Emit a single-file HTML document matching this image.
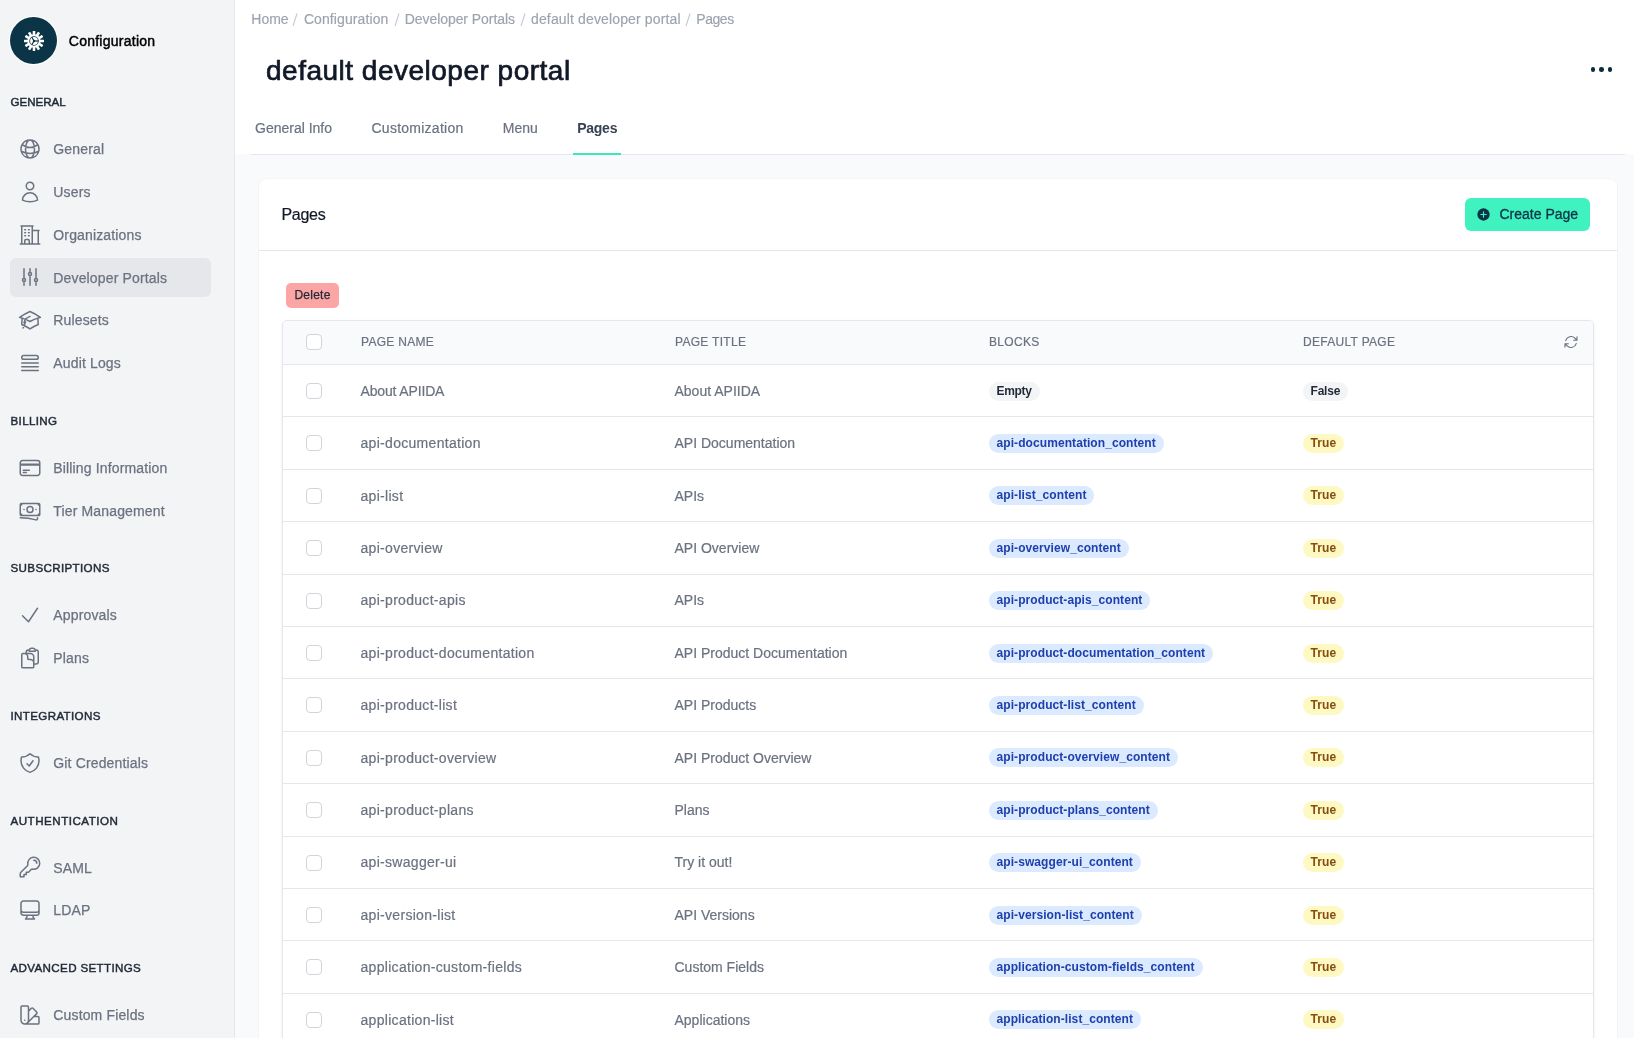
<!DOCTYPE html><html><head><meta charset="utf-8"><title>default developer portal</title><style>
*{box-sizing:border-box;margin:0;padding:0}
html,body{width:1634px;height:1038px;overflow:hidden;background:#f9fafb;font-family:"Liberation Sans",sans-serif;}
.abs{position:absolute}
#sb,#main{will-change:transform}
#sb{position:absolute;left:0;top:0;width:235px;height:1038px;background:#f3f4f6;border-right:1px solid #e5e7eb}
.logo{position:absolute;left:9px;top:16px;width:49px;height:49px;border-radius:50%;background:#fff;}
.logo .in{position:absolute;left:1px;top:1px;width:47px;height:47px;border-radius:50%;background:#0b3446}
.logo svg{position:absolute;left:11.5px;top:11.5px}
.cfg{position:absolute;left:68.8px;top:30.5px;height:20px;line-height:20px;font-size:14px;color:#000;letter-spacing:0.25px;-webkit-text-stroke:0.45px #000}
.sh{position:absolute;left:10.5px;height:16px;line-height:16px;font-size:11.6px;color:#1f2937;letter-spacing:0.35px;-webkit-text-stroke:0.45px #1f2937}
.ni{position:absolute;left:10px;width:200.5px;height:38.8px;border-radius:6px}
.ni.act{background:#e5e7eb}
.ni svg{position:absolute;left:7.7px;top:7.4px}
.ni span{position:absolute;left:43.3px;top:9.5px;height:20px;line-height:20px;font-size:14px;color:#6b7280;white-space:nowrap;letter-spacing:0.15px;-webkit-text-stroke:0.25px #6b7280}
#main{position:absolute;left:235px;top:0;width:1399px;height:1038px;background:#f9fafb}
#hdr{position:absolute;left:0;top:0;width:1399px;height:154px;background:#fff}
.bc{position:absolute;top:9px;height:20px;line-height:20px;font-size:14px;color:#9ca3af;white-space:nowrap;letter-spacing:0.08px;-webkit-text-stroke:0.15px #9ca3af}
.bcs{position:absolute;top:12px;width:6px;height:15px}
.title{position:absolute;left:31px;top:52.8px;height:36px;line-height:36px;font-size:28px;letter-spacing:0.5px;-webkit-text-stroke:0.7px #111827;color:#111827;white-space:nowrap}
.kebab{position:absolute;top:67px;width:4.6px;height:4.6px;border-radius:50%;background:#0b2a3a}
.tabline{position:absolute;left:16px;top:154px;width:1374px;height:1px;background:#e5e7eb}
.tab{position:absolute;top:118px;height:20px;line-height:20px;font-size:14px;color:#6b7280;white-space:nowrap;-webkit-text-stroke:0.2px #6b7280}
.tab.act{color:#374151;font-weight:bold;-webkit-text-stroke:0;letter-spacing:-0.25px}
.uline{position:absolute;left:338px;top:153px;width:48px;height:2px;background:#3ee8b4}
#card{position:absolute;left:24px;top:179px;width:1358px;height:900px;background:#fff;border-radius:8px;box-shadow:0 0 0 1px rgba(17,24,39,0.018),0 1px 2px rgba(0,0,0,0.04)}
.ctitle{position:absolute;left:22.5px;top:25.2px;height:22px;line-height:22px;font-size:16px;letter-spacing:-0.3px;-webkit-text-stroke:0.2px #111827;color:#111827}
.cbtn{position:absolute;left:1206px;top:19px;width:125px;height:33px;border-radius:6px;background:#41f2c1}
.cbtn svg{position:absolute;left:11.8px;top:9.7px}
.cbtn span{position:absolute;left:34.5px;top:5.7px;height:20px;line-height:20px;font-size:14px;color:#0b3446;white-space:nowrap;-webkit-text-stroke:0.3px #0b3446}
.cdiv{position:absolute;left:0;top:71px;width:1358px;height:1px;background:#e5e7eb}
.del{position:absolute;left:27px;top:104px;width:53px;height:25px;border-radius:5px;background:#fca5a5;font-size:12px;line-height:25px;text-align:center;color:#1f2937;letter-spacing:0.25px;-webkit-text-stroke:0.25px #1f2937}
#tbl{position:absolute;left:23px;top:141px;width:1312px;height:800px;border:1px solid #e5e7eb;border-radius:5px;box-shadow:0 1px 3px rgba(0,0,0,0.08);overflow:hidden;background:#fff}
.th{position:absolute;left:0;top:0;width:1310px;height:44px;background:#f9fafb;border-bottom:1px solid #e5e7eb}
.thx{position:absolute;top:13px;height:16px;line-height:16px;font-size:12px;color:#6b7280;letter-spacing:0.3px;-webkit-text-stroke:0.2px #6b7280;white-space:nowrap}
.cb{position:absolute;left:23px;width:16px;height:16px;border:1px solid #d1d5db;border-radius:4px;background:#fff}
.row{position:absolute;left:0;width:1310px;border-bottom:1px solid #e5e7eb}
.td{position:absolute;height:20px;line-height:20px;font-size:14px;color:#6b7280;white-space:nowrap;-webkit-text-stroke:0.2px #6b7280}
.bd{position:absolute;height:19px;line-height:19px;font-size:12px;font-weight:bold;letter-spacing:0.08px;padding:0 8px;border-radius:10px;white-space:nowrap}
.bg{background:#f3f4f6;color:#1f2937}
.bb{background:#dbeafe;color:#1e40af}
.by{background:#fef9c3;color:#854d0e}
</style></head><body>
<div id="sb"><div class="logo"><div class="in"><svg width="24" height="24" viewBox="0 0 24 24"><g fill="#fff"><rect x="10.7" y="2" width="2.6" height="4.6" rx="0.4" transform="rotate(0 12 12)"/><rect x="10.7" y="2" width="2.6" height="4.6" rx="0.4" transform="rotate(30 12 12)"/><rect x="10.7" y="2" width="2.6" height="4.6" rx="0.4" transform="rotate(60 12 12)"/><rect x="10.7" y="2" width="2.6" height="4.6" rx="0.4" transform="rotate(90 12 12)"/><rect x="10.7" y="2" width="2.6" height="4.6" rx="0.4" transform="rotate(120 12 12)"/><rect x="10.7" y="2" width="2.6" height="4.6" rx="0.4" transform="rotate(150 12 12)"/><rect x="10.7" y="2" width="2.6" height="4.6" rx="0.4" transform="rotate(180 12 12)"/><rect x="10.7" y="2" width="2.6" height="4.6" rx="0.4" transform="rotate(210 12 12)"/><rect x="10.7" y="2" width="2.6" height="4.6" rx="0.4" transform="rotate(240 12 12)"/><rect x="10.7" y="2" width="2.6" height="4.6" rx="0.4" transform="rotate(270 12 12)"/><rect x="10.7" y="2" width="2.6" height="4.6" rx="0.4" transform="rotate(300 12 12)"/><rect x="10.7" y="2" width="2.6" height="4.6" rx="0.4" transform="rotate(330 12 12)"/></g><circle cx="12" cy="12" r="5.7" fill="#0b3446" stroke="#fff" stroke-width="1.9"/><circle cx="12" cy="12" r="3.9" fill="#fff"/><g stroke="#0b3446" stroke-width="1.2"><line x1="12" y1="12" x2="16.6" y2="12"/><line x1="12" y1="12" x2="9.7" y2="8"/><line x1="12" y1="12" x2="9.7" y2="16"/></g><circle cx="12" cy="12" r="1.2" fill="#0b3446"/></svg></div></div><div class="cfg">Configuration</div><div class="sh" style="top:94.20px;letter-spacing:-0.05px">GENERAL</div><div class="ni" style="top:129.90px"><svg width="24" height="24" viewBox="0 0 24 24" fill="none" stroke="#6b7280" stroke-width="1.5" stroke-linecap="round" stroke-linejoin="round" ><path d="M12 21a9.004 9.004 0 008.716-6.747M12 21a9.004 9.004 0 01-8.716-6.747M12 21c2.485 0 4.5-4.03 4.5-9S14.485 3 12 3m0 18c-2.485 0-4.5-4.03-4.5-9S9.515 3 12 3m0 0a8.997 8.997 0 017.843 4.582M12 3a8.997 8.997 0 00-7.843 4.582m15.686 0A11.953 11.953 0 0112 10.5c-2.998 0-5.74-1.1-7.843-2.918m15.686 0A8.959 8.959 0 0121 12c0 .778-.099 1.533-.284 2.253m0 0A17.919 17.919 0 0112 16.5c-3.162 0-6.133-.815-8.716-2.247m0 0A9.015 9.015 0 013 12c0-1.605.42-3.113 1.157-4.418"/></svg><span>General</span></div><div class="ni" style="top:172.60px"><svg width="24" height="24" viewBox="0 0 24 24" fill="none" stroke="#6b7280" stroke-width="1.5" stroke-linecap="round" stroke-linejoin="round" ><path d="M15.75 6a3.75 3.75 0 11-7.5 0 3.75 3.75 0 017.5 0zM4.501 20.118a7.5 7.5 0 0114.998 0A17.933 17.933 0 0112 21.75c-2.676 0-5.216-.584-7.499-1.632z"/></svg><span>Users</span></div><div class="ni" style="top:215.20px"><svg width="24" height="24" viewBox="0 0 24 24" fill="none" stroke="#6b7280" stroke-width="1.5" stroke-linecap="round" stroke-linejoin="round" ><path d="M2.25 21h19.5m-18-18v18m10.5-18v18m6-13.5V21M6.75 6.75h.75m-.75 3h.75m-.75 3h.75m3-6h.75m-.75 3h.75m-.75 3h.75M6.75 21v-3.375c0-.621.504-1.125 1.125-1.125h2.25c.621 0 1.125.504 1.125 1.125V21M3 3h12m-.75 4.5H21"/></svg><span>Organizations</span></div><div class="ni act" style="top:258.00px"><svg width="24" height="24" viewBox="0 0 24 24" fill="none" stroke="#6b7280" stroke-width="1.5" stroke-linecap="round" stroke-linejoin="round" ><path d="M6 13.5V3.75m0 9.75a1.5 1.5 0 010 3m0-3a1.5 1.5 0 000 3m0 3.75V16.5m12-3V3.75m0 9.75a1.5 1.5 0 010 3m0-3a1.5 1.5 0 000 3m0 3.75V16.5m-6-9V3.75m0 3.75a1.5 1.5 0 010 3m0-3a1.5 1.5 0 000 3m0 9.75V10.5"/></svg><span>Developer Portals</span></div><div class="ni" style="top:300.80px"><svg width="24" height="24" viewBox="0 0 24 24" fill="none" stroke="#6b7280" stroke-width="1.5" stroke-linecap="round" stroke-linejoin="round" ><path d="M4.26 10.147a60.436 60.436 0 00-.491 6.347A48.627 48.627 0 0112 20.904a48.627 48.627 0 018.232-4.41 60.46 60.46 0 00-.491-6.347m-15.482 0a50.57 50.57 0 00-2.658-.813A59.905 59.905 0 0112 3.493a59.902 59.902 0 0110.399 5.84c-.896.248-1.783.52-2.658.814m-15.482 0A50.697 50.697 0 0112 13.489a50.702 50.702 0 017.74-3.342M6.75 15a.75.75 0 100-1.5.75.75 0 000 1.5zm0 0v-3.675A55.378 55.378 0 0112 8.443m-7.007 11.55A5.981 5.981 0 006.75 15.75v-1.5"/></svg><span>Rulesets</span></div><div class="ni" style="top:343.30px"><svg width="24" height="24" viewBox="0 0 24 24" fill="none" stroke="#6b7280" stroke-width="1.5" stroke-linecap="round" stroke-linejoin="round" ><path d="M3.75 12h16.5m-16.5 3.75h16.5M3.75 19.5h16.5M5.625 4.5h12.75a1.875 1.875 0 010 3.75H5.625a1.875 1.875 0 010-3.75z"/></svg><span>Audit Logs</span></div><div class="sh" style="top:412.80px;">BILLING</div><div class="ni" style="top:448.60px"><svg width="24" height="24" viewBox="0 0 24 24" fill="none" stroke="#6b7280" stroke-width="1.5" stroke-linecap="round" stroke-linejoin="round" ><path d="M2.25 8.25h19.5M2.25 9h19.5m-16.5 5.25h6m-6 2.25h3m-3.75 3h15a2.25 2.25 0 002.25-2.25V6.75A2.25 2.25 0 0019.5 4.5h-15a2.25 2.25 0 00-2.25 2.25v10.5A2.25 2.25 0 004.5 19.5z"/></svg><span>Billing Information</span></div><div class="ni" style="top:491.20px"><svg width="24" height="24" viewBox="0 0 24 24" fill="none" stroke="#6b7280" stroke-width="1.5" stroke-linecap="round" stroke-linejoin="round" ><path d="M2.25 18.75a60.07 60.07 0 0115.797 2.101c.727.198 1.453-.342 1.453-1.096V18.75M3.75 4.5v.75A.75.75 0 013 6h-.75m0 0v-.375c0-.621.504-1.125 1.125-1.125H20.25M2.25 6v9m18-10.5v.75c0 .414.336.75.75.75h.75m-1.5-1.5h.375c.621 0 1.125.504 1.125 1.125v9.75c0 .621-.504 1.125-1.125 1.125h-.375m1.5-1.5H21a.75.75 0 00-.75.75v.75m0 0H3.75m0 0h-.375a1.125 1.125 0 01-1.125-1.125V15m1.5 1.5v-.75A.75.75 0 003 15h-.75M15 10.5a3 3 0 11-6 0 3 3 0 016 0zm3 0h.008v.008H18V10.5zm-12 0h.008v.008H6V10.5z"/></svg><span>Tier Management</span></div><div class="sh" style="top:560.30px;">SUBSCRIPTIONS</div><div class="ni" style="top:595.80px"><svg width="24" height="24" viewBox="0 0 24 24" fill="none" stroke="#6b7280" stroke-width="1.5" stroke-linecap="round" stroke-linejoin="round" ><path d="M4.5 12.75l6 6 9-13.5"/></svg><span>Approvals</span></div><div class="ni" style="top:638.60px"><svg width="24" height="24" viewBox="0 0 24 24" fill="none" stroke="#6b7280" stroke-width="1.5" stroke-linecap="round" stroke-linejoin="round" ><path d="M8.25 7.5V6.108c0-1.135.845-2.098 1.976-2.192.373-.03.748-.057 1.123-.08M15.75 18H18a2.25 2.25 0 002.25-2.25V6.108c0-1.135-.845-2.098-1.976-2.192a48.424 48.424 0 00-1.123-.08M15.75 18.75v-1.875a3.375 3.375 0 00-3.375-3.375h-1.5a1.125 1.125 0 01-1.125-1.125v-1.5A3.375 3.375 0 006.375 7.5H5.25m11.9-3.664A2.251 2.251 0 0015 2.25h-1.5a2.251 2.251 0 00-2.15 1.586m5.8 0c.065.21.1.433.1.664v.75h-6V4.5c0-.231.035-.454.1-.664M6.75 7.5H4.875c-.621 0-1.125.504-1.125 1.125v12c0 .621.504 1.125 1.125 1.125h9.75c.621 0 1.125-.504 1.125-1.125v-9.75A3.375 3.375 0 0012.375 7.5H6.75z"/></svg><span>Plans</span></div><div class="sh" style="top:707.90px;">INTEGRATIONS</div><div class="ni" style="top:743.30px"><svg width="24" height="24" viewBox="0 0 24 24" fill="none" stroke="#6b7280" stroke-width="1.5" stroke-linecap="round" stroke-linejoin="round" ><path d="M9 12.75L11.25 15 15 9.75m-3-7.036A11.959 11.959 0 013.598 6 11.99 11.99 0 003 9.749c0 5.592 3.824 10.29 9 11.623 5.176-1.332 9-6.03 9-11.622 0-1.31-.21-2.571-.598-3.751h-.152c-3.196 0-6.1-1.248-8.25-3.285z"/></svg><span>Git Credentials</span></div><div class="sh" style="top:812.70px;letter-spacing:0.5px">AUTHENTICATION</div><div class="ni" style="top:848.10px"><svg width="24" height="24" viewBox="0 0 24 24" fill="none" stroke="#6b7280" stroke-width="1.5" stroke-linecap="round" stroke-linejoin="round" ><path d="M15.75 5.25a3 3 0 013 3m3 0a6 6 0 01-7.029 5.912c-.563-.097-1.159.026-1.563.43L10.5 17.25H8.25v2.25H6v2.25H2.25v-2.818c0-.597.237-1.17.659-1.591l6.499-6.499c.404-.404.527-1 .43-1.563A6 6 0 1121.75 8.25z"/></svg><span>SAML</span></div><div class="ni" style="top:890.80px"><svg width="24" height="24" viewBox="0 0 24 24" fill="none" stroke="#6b7280" stroke-width="1.5" stroke-linecap="round" stroke-linejoin="round" ><path d="M9 17.25v1.007a3 3 0 01-.879 2.122L7.5 21h9l-.621-.621A3 3 0 0115 18.257V17.25m6-12V15a2.25 2.25 0 01-2.25 2.25H5.25A2.25 2.25 0 013 15V5.25m18 0A2.25 2.25 0 0018.75 3H5.25A2.25 2.25 0 003 5.25m18 0V12a2.25 2.25 0 01-2.25 2.25H5.25A2.25 2.25 0 013 12V5.25"/></svg><span>LDAP</span></div><div class="sh" style="top:959.50px;">ADVANCED SETTINGS</div><div class="ni" style="top:995.80px"><svg width="24" height="24" viewBox="0 0 24 24" fill="none" stroke="#6b7280" stroke-width="1.5" stroke-linecap="round" stroke-linejoin="round" ><path d="M4.098 19.902a3.75 3.75 0 005.304 0l6.401-6.402M6.75 21A3.75 3.75 0 013 17.25V4.125C3 3.504 3.504 3 4.125 3h5.25c.621 0 1.125.504 1.125 1.125v4.072M6.75 21a3.75 3.75 0 003.75-3.75V8.197M6.75 21h13.125c.621 0 1.125-.504 1.125-1.125v-5.25c0-.621-.504-1.125-1.125-1.125h-4.072M10.5 8.197l2.88-2.88c.438-.439 1.15-.439 1.59 0l3.712 3.713c.44.44.44 1.152 0 1.59l-2.879 2.88M6.75 17.25h.008v.008H6.75v-.008z"/></svg><span>Custom Fields</span></div></div>
<div id="main"><div id="hdr"><div class="bc" style="left:16.3px;letter-spacing:0.00px">Home</div><svg class="bcs" style="left:57.4px" viewBox="0 0 6 15"><line x1="5" y1="1.5" x2="1" y2="14" stroke="#c5c9d0" stroke-width="1.1"/></svg><div class="bc" style="left:68.9px;letter-spacing:0.10px">Configuration</div><svg class="bcs" style="left:158.5px" viewBox="0 0 6 15"><line x1="5" y1="1.5" x2="1" y2="14" stroke="#c5c9d0" stroke-width="1.1"/></svg><div class="bc" style="left:169.7px;letter-spacing:-0.06px">Developer Portals</div><svg class="bcs" style="left:284.9px" viewBox="0 0 6 15"><line x1="5" y1="1.5" x2="1" y2="14" stroke="#c5c9d0" stroke-width="1.1"/></svg><div class="bc" style="left:296.0px;letter-spacing:0.14px">default developer portal</div><svg class="bcs" style="left:450.1px" viewBox="0 0 6 15"><line x1="5" y1="1.5" x2="1" y2="14" stroke="#c5c9d0" stroke-width="1.1"/></svg><div class="bc" style="left:461.3px;letter-spacing:-0.45px">Pages</div><div class="title">default developer portal</div><div class="kebab" style="left:1355.70px"></div><div class="kebab" style="left:1364.20px"></div><div class="kebab" style="left:1372.90px"></div><div class="tabline"></div><div class="tab" style="left:20.0px;letter-spacing:0.00px">General Info</div><div class="tab" style="left:136.5px;letter-spacing:0.25px">Customization</div><div class="tab" style="left:267.8px;letter-spacing:0.00px">Menu</div><div class="tab act" style="left:342.2px;letter-spacing:-0.25px">Pages</div><div class="uline"></div></div><div id="card"><div class="ctitle">Pages</div><div class="cbtn"><svg width="13" height="13" viewBox="0 0 20 20"><circle cx="10" cy="10" r="9.5" fill="#0b3446"/><path d="M10 5.8v8.4M5.8 10h8.4" stroke="#41f2c1" stroke-width="1.7" stroke-linecap="round"/></svg><span>Create Page</span></div><div class="cdiv"></div><div class="del">Delete</div><div id="tbl"><div class="th"><div class="cb" style="top:13px"></div><div class="thx" style="left:78.0px">PAGE NAME</div><div class="thx" style="left:392.0px">PAGE TITLE</div><div class="thx" style="left:706.0px">BLOCKS</div><div class="thx" style="left:1020.0px">DEFAULT PAGE</div><div class="abs" style="left:1279.8px;top:12.8px"><svg width="16" height="16" viewBox="0 0 24 24" fill="none" stroke="#6b7280" stroke-width="1.7" stroke-linecap="round" stroke-linejoin="round" ><path d="M16.023 9.348h4.992v-.001M2.985 19.644v-4.992m0 0h4.992m-4.993 0l3.181 3.183a8.25 8.25 0 0013.803-3.7M4.031 9.865a8.25 8.25 0 0113.803-3.7l3.181 3.182m0-4.991v4.99"/></svg></div></div><div class="row" style="top:44.00px;height:52.40px"><div class="cb" style="top:18px"></div><div class="td" style="left:77.5px;top:15.9px;letter-spacing:-0.15px">About APIIDA</div><div class="td" style="left:391.5px;top:15.9px">About APIIDA</div><div class="bd bg" style="left:705.5px;top:16.5px;letter-spacing:-0.3px">Empty</div><div class="bd bg" style="left:1019.5px;top:16.5px;letter-spacing:-0.2px">False</div></div><div class="row" style="top:96.40px;height:52.40px"><div class="cb" style="top:18px"></div><div class="td" style="left:77.5px;top:15.9px;letter-spacing:0.3px">api-documentation</div><div class="td" style="left:391.5px;top:15.9px">API Documentation</div><div class="bd bb" style="left:705.5px;top:16.5px;">api-documentation_content</div><div class="bd by" style="left:1019.5px;top:16.5px;">True</div></div><div class="row" style="top:148.80px;height:52.40px"><div class="cb" style="top:18px"></div><div class="td" style="left:77.5px;top:15.9px;letter-spacing:0.3px">api-list</div><div class="td" style="left:391.5px;top:15.9px">APIs</div><div class="bd bb" style="left:705.5px;top:16.5px;">api-list_content</div><div class="bd by" style="left:1019.5px;top:16.5px;">True</div></div><div class="row" style="top:201.20px;height:52.40px"><div class="cb" style="top:18px"></div><div class="td" style="left:77.5px;top:15.9px;letter-spacing:0.3px">api-overview</div><div class="td" style="left:391.5px;top:15.9px">API Overview</div><div class="bd bb" style="left:705.5px;top:16.5px;">api-overview_content</div><div class="bd by" style="left:1019.5px;top:16.5px;">True</div></div><div class="row" style="top:253.60px;height:52.40px"><div class="cb" style="top:18px"></div><div class="td" style="left:77.5px;top:15.9px;letter-spacing:0.3px">api-product-apis</div><div class="td" style="left:391.5px;top:15.9px">APIs</div><div class="bd bb" style="left:705.5px;top:16.5px;">api-product-apis_content</div><div class="bd by" style="left:1019.5px;top:16.5px;">True</div></div><div class="row" style="top:306.00px;height:52.40px"><div class="cb" style="top:18px"></div><div class="td" style="left:77.5px;top:15.9px;letter-spacing:0.3px">api-product-documentation</div><div class="td" style="left:391.5px;top:15.9px">API Product Documentation</div><div class="bd bb" style="left:705.5px;top:16.5px;">api-product-documentation_content</div><div class="bd by" style="left:1019.5px;top:16.5px;">True</div></div><div class="row" style="top:358.40px;height:52.40px"><div class="cb" style="top:18px"></div><div class="td" style="left:77.5px;top:15.9px;letter-spacing:0.3px">api-product-list</div><div class="td" style="left:391.5px;top:15.9px">API Products</div><div class="bd bb" style="left:705.5px;top:16.5px;">api-product-list_content</div><div class="bd by" style="left:1019.5px;top:16.5px;">True</div></div><div class="row" style="top:410.80px;height:52.40px"><div class="cb" style="top:18px"></div><div class="td" style="left:77.5px;top:15.9px;letter-spacing:0.3px">api-product-overview</div><div class="td" style="left:391.5px;top:15.9px">API Product Overview</div><div class="bd bb" style="left:705.5px;top:16.5px;">api-product-overview_content</div><div class="bd by" style="left:1019.5px;top:16.5px;">True</div></div><div class="row" style="top:463.20px;height:52.40px"><div class="cb" style="top:18px"></div><div class="td" style="left:77.5px;top:15.9px;letter-spacing:0.3px">api-product-plans</div><div class="td" style="left:391.5px;top:15.9px">Plans</div><div class="bd bb" style="left:705.5px;top:16.5px;">api-product-plans_content</div><div class="bd by" style="left:1019.5px;top:16.5px;">True</div></div><div class="row" style="top:515.60px;height:52.40px"><div class="cb" style="top:18px"></div><div class="td" style="left:77.5px;top:15.9px;letter-spacing:0.3px">api-swagger-ui</div><div class="td" style="left:391.5px;top:15.9px">Try it out!</div><div class="bd bb" style="left:705.5px;top:16.5px;">api-swagger-ui_content</div><div class="bd by" style="left:1019.5px;top:16.5px;">True</div></div><div class="row" style="top:568.00px;height:52.40px"><div class="cb" style="top:18px"></div><div class="td" style="left:77.5px;top:15.9px;letter-spacing:0.3px">api-version-list</div><div class="td" style="left:391.5px;top:15.9px">API Versions</div><div class="bd bb" style="left:705.5px;top:16.5px;">api-version-list_content</div><div class="bd by" style="left:1019.5px;top:16.5px;">True</div></div><div class="row" style="top:620.40px;height:52.40px"><div class="cb" style="top:18px"></div><div class="td" style="left:77.5px;top:15.9px;letter-spacing:0.3px">application-custom-fields</div><div class="td" style="left:391.5px;top:15.9px">Custom Fields</div><div class="bd bb" style="left:705.5px;top:16.5px;">application-custom-fields_content</div><div class="bd by" style="left:1019.5px;top:16.5px;">True</div></div><div class="row" style="top:672.80px;height:52.40px"><div class="cb" style="top:18px"></div><div class="td" style="left:77.5px;top:15.9px;letter-spacing:0.3px">application-list</div><div class="td" style="left:391.5px;top:15.9px">Applications</div><div class="bd bb" style="left:705.5px;top:16.5px;">application-list_content</div><div class="bd by" style="left:1019.5px;top:16.5px;">True</div></div></div></div></div>
</body></html>
